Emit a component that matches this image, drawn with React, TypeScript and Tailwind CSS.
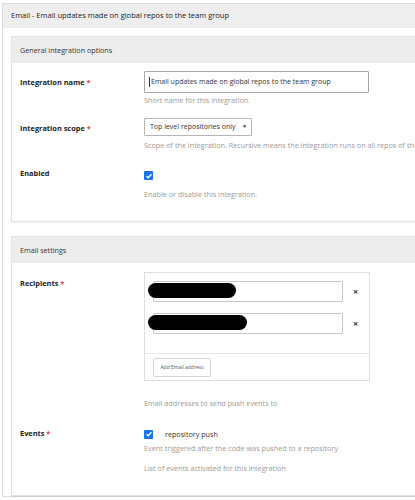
import React from 'react';

const Req = () => <span className="text-[#e0403a]"> *</span>;

const CheckBox = () => (
  <span className="flex h-[9px] w-[9px] items-center justify-center rounded-[1px] bg-[#1a73e8]">
    <svg viewBox="0 0 10 10" className="h-[8px] w-[8px]" fill="none" stroke="white" strokeWidth="1.8">
      <path d="M2 5.2l2 2 4-4.4" />
    </svg>
  </span>
);

const Hint: React.FC<{ children: React.ReactNode; className?: string }> = ({ children, className }) => (
  <div className={`text-[7.25px] leading-[10px] text-[#9a9a9a] whitespace-nowrap ${className ?? ''}`}>{children}</div>
);

const Label: React.FC<{ children: React.ReactNode; className?: string }> = ({ children, className }) => (
  <div className={`w-[124px] shrink-0 text-[7.4px] leading-[10px] font-bold text-[#222] ${className ?? ''}`}>{children}</div>
);

const Card: React.FC<{ title: string; children: React.ReactNode; className?: string }> = ({ title, children, className }) => (
  <div className={`border border-[#e2e2e2] bg-white shadow-[0_1px_1px_rgba(0,0,0,0.05)] ${className ?? ''}`}>
    <div className="flex h-[26px] items-center bg-[#ededed] px-[8px] text-[7.2px] text-[#333]">{title}</div>
    {children}
  </div>
);

const Recipient: React.FC<{ blob: string }> = ({ blob }) => (
  <div className="flex h-[21px] items-center">
    <div className="relative h-[21px] w-[190px] rounded-[1px] border border-[#c8c8c8] bg-white">
      <div className={`absolute top-[1px] -left-[6px] h-[15px] rounded-full bg-black ${blob}`} />
    </div>
    <span className="ml-[10px] text-[9px] font-bold leading-none text-[#333]">×</span>
  </div>
);

export default function App() {
  return (
    <div className="h-[500px] w-full overflow-hidden bg-white pl-[2px] pt-[3px]" style={{ fontFamily: '"Open Sans", "Noto Sans", sans-serif' }}>
      <div className="w-[640px] border border-[#dcdcdc]">
        {/* Header */}
        <div className="flex h-[24px] items-center bg-[#eeeeee] px-[8px] text-[7.5px] text-[#222]">
          Email - Email updates made on global repos to the team group
        </div>

        <div className="px-[8px] pt-[8px]">
          {/* General integration options */}
          <Card title="General integration options">
            <div className="px-[8px] pb-[22px] pt-[8px]">
              <div className="flex">
                <Label className="pt-[6px]">Integration name<Req /></Label>
                <div>
                  <div className="flex h-[22px] w-[225px] items-center rounded-[1px] border border-[#a8a8a8] px-[4px] text-[7px] text-[#333]">
                    <span className="mr-[1px] h-[10px] w-px bg-[#333]" />
                    Email updates made on global repos to the team group
                  </div>
                  <Hint className="mt-[2px]">Short name for this integration.</Hint>
                </div>
              </div>

              <div className="mt-[13px] flex">
                <Label className="pt-[5px]">Integration scope<Req /></Label>
                <div>
                  <div className="flex h-[18px] w-[108px] items-center justify-between rounded-[1px] border border-[#b5b5b5] pl-[5px] pr-[4px] text-[7px] text-[#333]">
                    <span>Top level repositories only</span>
                    <span className="text-[5px] text-[#333]">▼</span>
                  </div>
                  <Hint className="mt-[4px]">Scope of the integration. Recursive means the integration runs on all repos of the group and its subgroups.</Hint>
                </div>
              </div>

              <div className="mt-[18px] flex">
                <Label>Enabled</Label>
                <div>
                  <div className="mt-[3px] flex">
                    <CheckBox />
                  </div>
                  <Hint className="mt-[9px]">Enable or disable this integration.</Hint>
                </div>
              </div>
            </div>
          </Card>

          {/* Email settings */}
          <Card title="Email settings" className="mt-[14px]">
            <div className="px-[8px] pb-[22px] pt-[9px]">
              <div className="flex">
                <Label className="pt-[6px]">Recipients<Req /></Label>
                <div>
                  <div className="w-[226px] border border-[#dedede]">
                    <div className="flex flex-col gap-[11px] px-[8px] pb-[19px] pt-[8px]">
                      <Recipient blob="w-[88px]" />
                      <Recipient blob="w-[99px]" />
                    </div>
                    <div className="flex border-t border-[#e6e6e6] px-[8px] pb-[3px] pt-[4px]">
                      <button className="flex h-[19px] w-[58px] items-center justify-center rounded-[2px] border border-[#d6d6d6] bg-white text-[5px] leading-none text-[#555]">
                        Add Email address
                      </button>
                    </div>
                  </div>
                  <Hint className="mt-[17px]">Email addresses to send push events to</Hint>
                </div>
              </div>

              <div className="mt-[20px] flex">
                <Label>Events<Req /></Label>
                <div>
                  <div className="flex h-[11px] items-center pt-[1px]">
                    <CheckBox />
                    <span className="ml-[12px] text-[7.2px] leading-[10px] text-[#333]">repository push</span>
                  </div>
                  <Hint className="mt-[4px]">Event triggered after the code was pushed to a repository</Hint>
                  <Hint className="mt-[10px]">List of events activated for this integration</Hint>
                </div>
              </div>
            </div>
          </Card>
        </div>
      </div>
    </div>
  );
}
